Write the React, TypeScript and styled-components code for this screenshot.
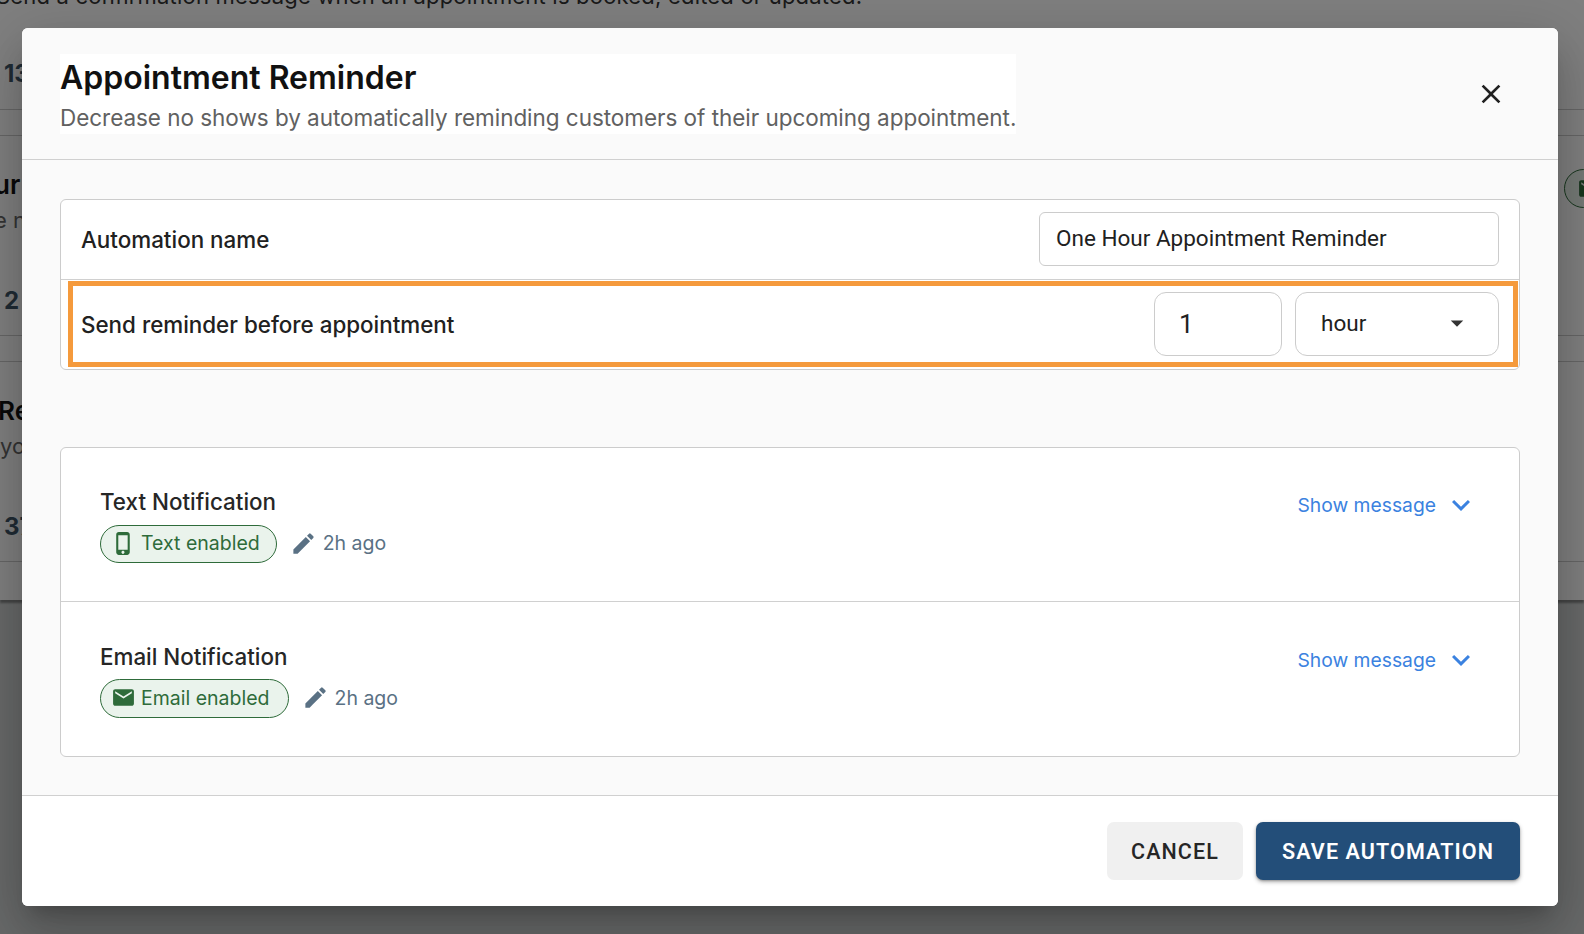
import React from "react";
import styled, { createGlobalStyle } from "styled-components";

const Global = createGlobalStyle`
  html, body { margin: 0; padding: 0; height: 100%; overflow: hidden; }
  body { font-family: "Inter", "Liberation Sans", sans-serif; background: #cfd2d2; }
  * { box-sizing: border-box; }
`;

const Page = styled.div`
  width: 1584px; height: 934px; overflow: hidden; background: #cfd2d2;
`;
const PageSheet = styled.div`
  height: 600px; background: #fff; display: flex; flex-direction: column;
  box-shadow: 0 3px 2px rgba(0,0,0,.35); overflow: hidden;
`;
const TopBlock = styled.div`
  height: 110px; border-bottom: 1px solid #ccc; padding-left: 0; flex: none;
`;
const TopLine = styled.div`
  font-size: 22px; line-height: 26px; color: #333; margin: -17px 0 0 -4px; white-space: nowrap; letter-spacing: .2px;
`;
const Count = styled.div`
  font-size: 24px; font-weight: 700; color: #3e5567; line-height: 30px; padding-left: 4px; margin-top: ${p => p.$top}px;
`;
const Strip = styled.div`
  height: 26px; border-bottom: 1px solid #ccc; flex: none;
`;
const Section = styled.div`
  height: 200px; border-bottom: 1px solid #ccc; flex: none; padding-top: 33px; position: relative;
  display: flex; justify-content: space-between; align-items: flex-start;
`;
const SectionText = styled.div`
  display: flex; flex-direction: column;
`;
const SectionTitle = styled.div`
  font-size: 26px; font-weight: 600; color: #111; line-height: 32px; margin-left: ${p => p.$shift}px;
`;
const SectionSub = styled.div`
  font-size: 22px; color: #666; line-height: 30px; margin-top: 4px; margin-left: ${p => p.$shift}px; white-space: pre;
`;
const PageBadge = styled.div`
  width: 60px; height: 39px; margin-right: -40px; border: 1px solid #2e6b3a; border-radius: 20px; background: #eaf3ec;
  display: flex; align-items: center; padding-left: 12px; color: #2e6b3a;
`;

const Backdrop = styled.div`
  position: fixed; inset: 0; background: rgba(0,0,0,.5); display: flex; align-items: flex-start;
  padding: 28px 26px 28px 22px;
`;
const Modal = styled.div`
  width: 1536px; height: 878px; background: #fff; border-radius: 6px; overflow: hidden; display: flex; flex-direction: column;
`;
const ModalShadow = styled.div`
  border-radius: 6px;
  box-shadow: 0 14px 18px -9px rgba(0,0,0,.2), 0 30px 48px 4px rgba(0,0,0,.14), 0 11px 58px 10px rgba(0,0,0,.12);
`;
const Header = styled.header`
  height: 132px; flex: none; background: #fafafa; border-bottom: 1px solid #d0d0d0; padding: 26px 51px 0 38px;
  display: flex; justify-content: space-between; align-items: flex-start;
`;
const HeadText = styled.div`
  background: #fff; height: 80px;
`;
const Title = styled.h1`
  margin: 0; font-size: 32px; font-weight: 600; line-height: 47px; color: #111; letter-spacing: 0;
`;
const Subtitle = styled.p`
  margin: 0; font-size: 22.5px; line-height: 33px; color: #616161; letter-spacing: -.04px; white-space: nowrap;
`;
const CloseBtn = styled.button`
  border: 0; background: none; padding: 0; width: 32px; height: 32px; margin-top: 24px; color: #212121; display: flex;
`;
const Body = styled.main`
  height: 636px; flex: none; background: #fafafa; border-bottom: 1px solid #d0d0d0; padding: 39px 38px 0 38px;
  display: flex; flex-direction: column; gap: 77px;
`;
const Card = styled.section`
  background: #fff; border: 1px solid #ccc; border-radius: 6px;
`;
const FormRow = styled.div`
  height: ${p => p.$h}px; padding: 0 20px 1px; display: flex; align-items: center; gap: 13px; position: relative;
  border-bottom: ${p => p.$divider ? "1px solid #d0d0d0" : "none"};
`;
const Label = styled.label`
  font-size: 22.4px; font-weight: 500; color: #212121; flex: 1; white-space: nowrap;
`;
const Field = styled.div`
  width: ${p => p.$w}px; height: ${p => p.$h}px; border: 1px solid #ccc; border-radius: ${p => p.$r}px; background: #fff;
  padding: ${p => p.$pad}; display: flex; align-items: center; justify-content: space-between; flex: none;
  font-family: "Roboto", "Liberation Sans", sans-serif; font-size: ${p => p.$fs}px; color: #212121;
`;
const Highlight = styled.div`
  position: absolute; left: 7px; right: 1px; top: 1px; bottom: 2px; border: 5px solid #f59a3c; pointer-events: none;
`;
const NoteRow = styled.div`
  height: ${p => p.$h}px; padding: ${p => p.$top}px 40px 0 39px; display: flex; justify-content: space-between; align-items: flex-start;
  border-bottom: ${p => p.$divider ? "1px solid #d0d0d0" : "none"};
`;
const NoteMain = styled.div`
  display: flex; flex-direction: column; gap: ${p => p.$gap}px;
`;
const NoteTitle = styled.div`
  font-size: 22.4px; font-weight: 500; line-height: 32px; color: #262626;
`;
const Meta = styled.div`
  display: flex; align-items: center; gap: 13px;
`;
const Pill = styled.div`
  height: ${p => p.$h}px; border: 1px solid #2e6b3a; border-radius: 20px; background: #eaf3ec; color: #2e6b3a;
  font-size: 19.5px; display: flex; align-items: center; gap: 5px; padding: 0 ${p => p.$right}px 2px 10px;
`;
const Ago = styled.div`
  display: flex; align-items: center; gap: 6px; font-size: 19.5px; color: #5a7184; margin-top: -2px;
`;
const ShowMsg = styled.button`
  border: 0; background: none; padding: 0; display: flex; align-items: center; gap: 7px; margin-top: 1px;
  font-family: inherit; font-size: 19.3px; color: #3b82e0;
`;
const Footer = styled.footer`
  flex: 1; background: #fff; padding: 26px 38px 0 0; display: flex; justify-content: flex-end; align-items: flex-start; gap: 13px;
`;
const Btn = styled.button`
  height: 58px; width: ${p => p.$w}px; border: 0; border-radius: 7px; font-family: "Roboto", "Liberation Sans", sans-serif;
  font-size: 21.5px; font-weight: ${p => p.$primary ? 600 : 500}; letter-spacing: 1.09px;
  background: ${p => p.$primary ? "#234e79" : "#f0f0f0"}; color: ${p => p.$primary ? "#fff" : "#262626"};
  box-shadow: ${p => p.$primary ? "0 2px 4px rgba(0,0,0,.3), 0 1px 2px rgba(0,0,0,.2)" : "none"};
`;

const Icon = ({ d, size, color = "currentColor" }: { d: string; size: number; color?: string }) => (
  <svg width={size} height={size} viewBox="0 0 24 24" fill={color} style={{ flex: "none", display: "block" }}><path d={d} /></svg>
);
const CLOSE = "M19 6.41 17.59 5 12 10.59 6.41 5 5 6.41 10.59 12 5 17.59 6.41 19 12 13.41 17.59 19 19 17.59 13.41 12z";
const EDIT = "M3 17.25V21h3.75L17.81 9.94l-3.75-3.75L3 17.25zM20.71 7.04c.39-.39.39-1.02 0-1.41l-2.34-2.34a.9959.9959 0 0 0-1.41 0l-1.83 1.83 3.75 3.75 1.83-1.83z";
const PHONE = "M15.5 1h-8C6.12 1 5 2.12 5 3.5v17C5 21.88 6.12 23 7.5 23h8c1.38 0 2.5-1.12 2.5-2.5v-17C18 2.12 16.88 1 15.5 1zm-4 21c-.83 0-1.5-.67-1.5-1.5s.67-1.5 1.5-1.5 1.5.67 1.5 1.5-.67 1.5-1.5 1.5zm4.5-4H7V4h9v14z";
const MAIL = "M20 4H4c-1.1 0-1.99.9-1.99 2L2 18c0 1.1.9 2 2 2h16c1.1 0 2-.9 2-2V6c0-1.1-.9-2-2-2zm0 4l-8 5-8-5V6l8 5 8-5v2z";
const EXPAND = "M16.59 8.59 12 13.17 7.41 8.59 6 10l6 6 6-6z";
const CARET = "M7 10l5 5 5-5z";

const Note = ({ title, icon, label, top, h, divider, gap, pillH, right }: any) => (
  <NoteRow $h={h} $top={top} $divider={divider}>
    <NoteMain $gap={gap}>
      <NoteTitle>{title}</NoteTitle>
      <Meta>
        <Pill $h={pillH} $right={right}><Icon d={icon} size={25} />{label}</Pill>
        <Ago><Icon d={EDIT} size={27} color="#5a7184" />2h ago</Ago>
      </Meta>
    </NoteMain>
    <ShowMsg>Show message<Icon d={EXPAND} size={36} /></ShowMsg>
  </NoteRow>
);

export default function App() {
  return (
    <>
      <Global />
      <Page>
        <PageSheet>
          <TopBlock>
            <TopLine>Send a confirmation message when an appointment is booked, edited or updated.</TopLine>
            <Count $top={50}>13</Count>
          </TopBlock>
          <Strip />
          <Section>
            <SectionText>
              <SectionTitle $shift={-6}>ur</SectionTitle>
              <SectionSub $shift={-6}>e n</SectionSub>
              <Count $top={51}>2</Count>
            </SectionText>
            <PageBadge><Icon d={MAIL} size={25} /></PageBadge>
          </Section>
          <Strip />
          <Section>
            <SectionText>
              <SectionTitle $shift={-2}>Re</SectionTitle>
              <SectionSub $shift={0}>yo</SectionSub>
              <Count $top={51}>37</Count>
            </SectionText>
          </Section>
        </PageSheet>
      </Page>
      <Backdrop>
        <ModalShadow>
          <Modal>
            <Header>
              <HeadText>
                <Title>Appointment Reminder</Title>
                <Subtitle>Decrease no shows by automatically reminding customers of their upcoming appointment.</Subtitle>
              </HeadText>
              <CloseBtn><Icon d={CLOSE} size={32} /></CloseBtn>
            </Header>
            <Body>
              <Card>
                <FormRow $h={80} $divider>
                  <Label>Automation name</Label>
                  <Field $w={460} $h={54} $r={6} $pad="0 16px 2px" $fs={22.5}>One Hour Appointment Reminder</Field>
                </FormRow>
                <FormRow $h={89}>
                  <Label>Send reminder before appointment</Label>
                  <Field $w={128} $h={64} $r={12} $pad="0 24px" $fs={26}>1</Field>
                  <Field $w={204} $h={64} $r={12} $pad="0 26px 2px 25px" $fs={22.5}>hour<Icon d={CARET} size={30} color="#333" /></Field>
                  <Highlight />
                </FormRow>
              </Card>
              <Card>
                <Note title="Text Notification" icon={PHONE} label="Text enabled" top={38} h={154} gap={7} pillH={38} right={16} divider />
                <Note title="Email Notification" icon={MAIL} label="Email enabled" top={39} h={154} gap={6} pillH={39} right={18} />
              </Card>
            </Body>
            <Footer>
              <Btn $w={136}>CANCEL</Btn>
              <Btn $w={264} $primary>SAVE AUTOMATION</Btn>
            </Footer>
          </Modal>
        </ModalShadow>
      </Backdrop>
    </>
  );
}
